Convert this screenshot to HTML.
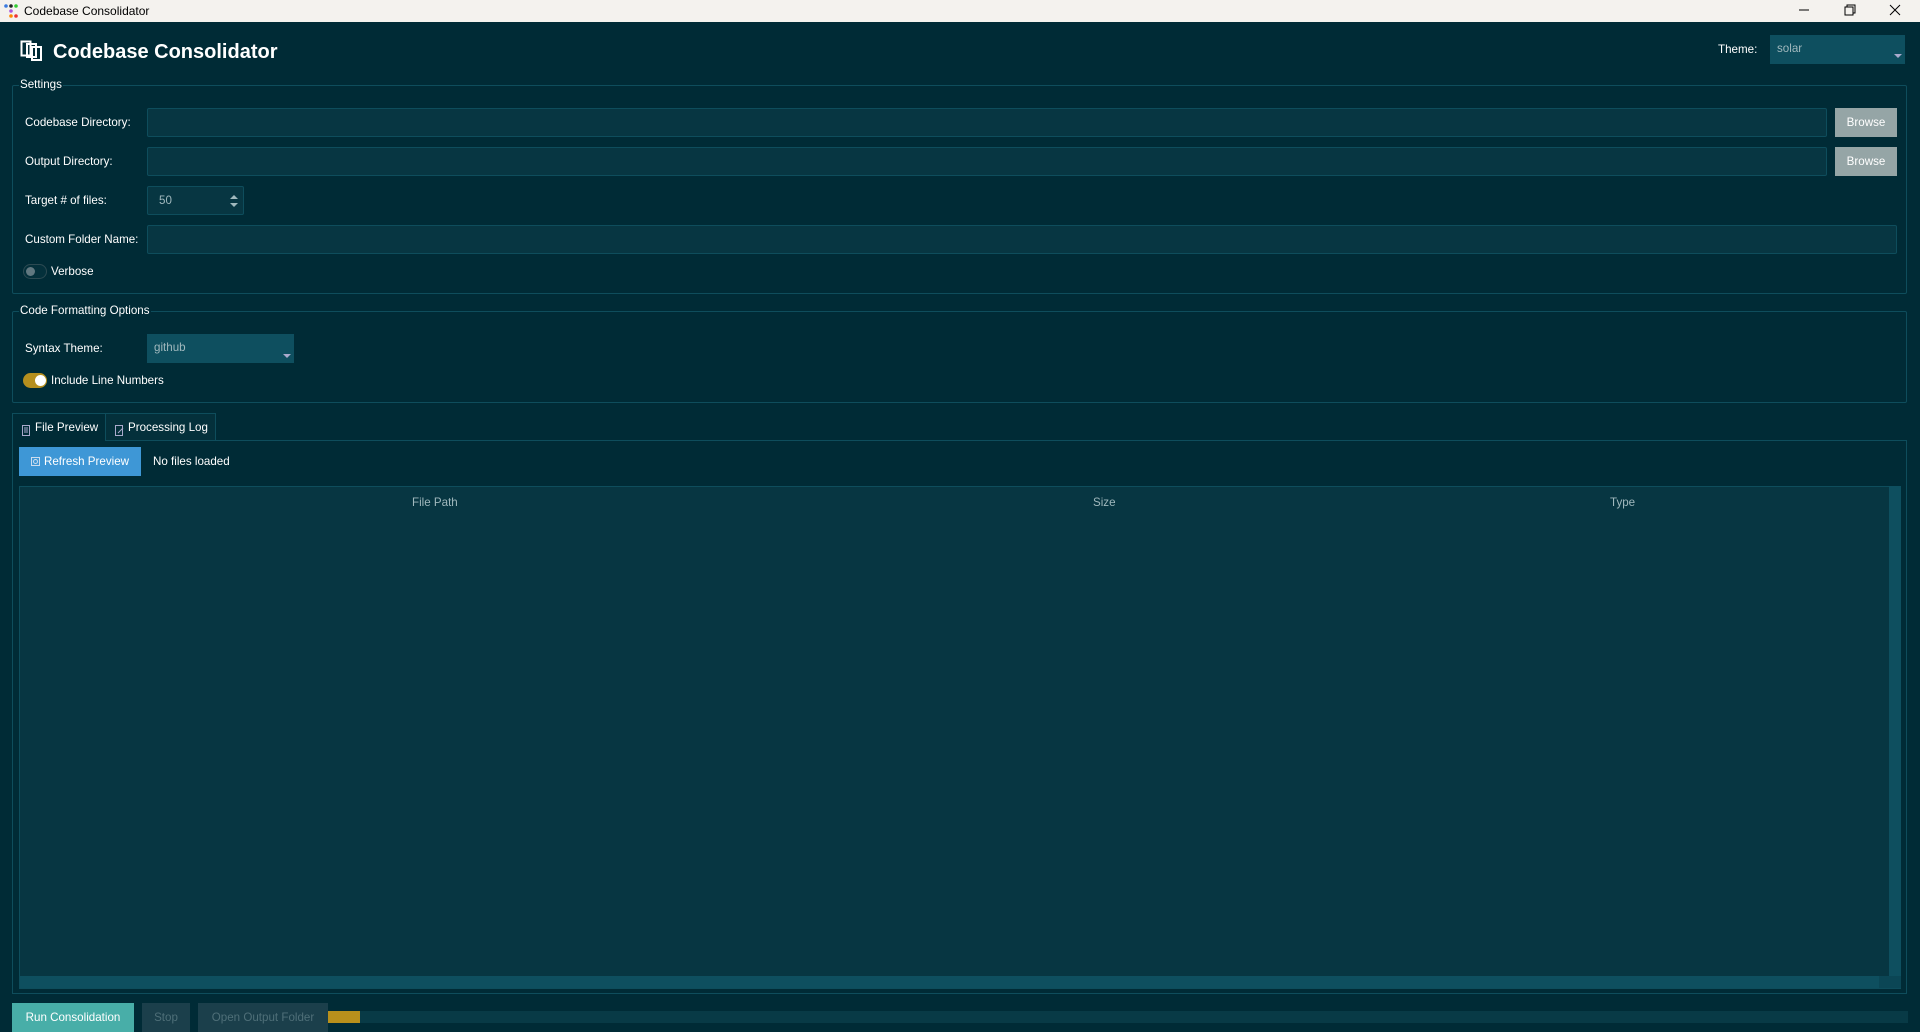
<!DOCTYPE html>
<html><head><meta charset="utf-8"><style>
*{box-sizing:border-box;margin:0;padding:0}
body{width:1920px;height:1032px;background:#002b36;font-family:"Segoe UI","Liberation Sans",sans-serif;font-size:11.6px;color:#fff;position:relative;overflow:hidden}
.a{position:absolute}
.inp{position:absolute;background:#073642;border:1px solid #0e4d5c;border-radius:2px}
.btn{position:absolute;display:flex;align-items:center;justify-content:center}
.grp{position:absolute;border:1px solid #0e4d5c;border-radius:2px}
.leg{position:absolute;background:#002b36;padding:0 1px;line-height:14px}
.lbl{position:absolute;line-height:14px}
</style></head><body>
<div class="a" style="left:0;top:0;width:1920px;height:22px;background:#f4f2ee;color:#000"></div>
<svg class="a" style="left:3px;top:3px" width="16" height="16"><circle cx="3" cy="3" r="1.8" fill="#3a7be0"/><circle cx="8" cy="3" r="1.8" fill="#222"/><circle cx="13" cy="3" r="1.8" fill="#3c3"/><circle cx="8" cy="8" r="1.8" fill="#a5d"/><circle cx="8" cy="13" r="1.8" fill="#f80"/><circle cx="13" cy="13" r="1.8" fill="#e33"/></svg>
<div class="lbl" style="left:24px;top:4px;color:#000;font-size:12px">Codebase Consolidator</div>
<svg class="a" style="left:1794px;top:4px" width="120" height="14"><line x1="5" y1="6" x2="15" y2="6" stroke="#000"/><rect x="51" y="3" width="8" height="8" fill="none" stroke="#000"/><path d="M53 3V1h8v8h-2" fill="none" stroke="#000"/><path d="M96 1l10 10M106 1l-10 10" stroke="#000"/></svg>
<svg class="a" style="left:20px;top:40px" width="24" height="22"><rect x="1.5" y="1.5" width="9" height="14" fill="none" stroke="#fff" stroke-width="2"/><rect x="7" y="4" width="9" height="13" fill="none" stroke="#fff" stroke-width="2"/><rect x="12" y="7" width="9" height="13" fill="none" stroke="#fff" stroke-width="2"/></svg>
<div class="lbl" style="left:53px;top:39px;font-size:20px;font-weight:bold;line-height:26px">Codebase Consolidator</div>
<div class="lbl" style="left:1718px;top:43px">Theme:</div>
<div class="a" style="left:1770px;top:35px;width:135px;height:29px;background:#0e4f5f"><span class="lbl" style="left:7px;top:7px;color:#a0b8bd">solar</span><svg class="a" style="left:124px;top:19px" width="8" height="5"><path d="M0 0h8L4 4z" fill="#aac"/></svg></div>

<div class="grp" style="left:12px;top:85px;width:1895px;height:209px"></div>
<div class="leg" style="left:19px;top:78px">Settings</div>
<div class="lbl" style="left:25px;top:116px">Codebase Directory:</div>
<div class="inp" style="left:147px;top:108px;width:1680px;height:29px"></div>
<div class="btn" style="left:1835px;top:108px;width:62px;height:29px;background:#95a5a6">Browse</div>
<div class="lbl" style="left:25px;top:155px">Output Directory:</div>
<div class="inp" style="left:147px;top:147px;width:1680px;height:29px"></div>
<div class="btn" style="left:1835px;top:147px;width:62px;height:29px;background:#95a5a6">Browse</div>
<div class="lbl" style="left:25px;top:194px">Target # of files:</div>
<div class="inp" style="left:147px;top:186px;width:97px;height:29px"><span class="lbl" style="left:11px;top:7px;color:#a0b8bd">50</span><svg class="a" style="left:82px;top:7px" width="8" height="14"><path d="M0 5L4 1 8 5zM0 9l4 4 4-4z" fill="#a0b8bd"/></svg></div>
<div class="lbl" style="left:25px;top:233px">Custom Folder Name:</div>
<div class="inp" style="left:147px;top:225px;width:1750px;height:29px"></div>
<div class="a" style="left:23px;top:264px;width:24px;height:15px;border-radius:8px;border:1px solid #2c4a52;background:#04303b"><div class="a" style="left:2px;top:2px;width:9px;height:9px;border-radius:50%;background:#617880"></div></div>
<div class="lbl" style="left:51px;top:265px">Verbose</div>

<div class="grp" style="left:12px;top:311px;width:1895px;height:92px"></div>
<div class="leg" style="left:19px;top:304px">Code Formatting Options</div>
<div class="lbl" style="left:25px;top:342px">Syntax Theme:</div>
<div class="a" style="left:147px;top:334px;width:147px;height:29px;background:#0e4f5f"><span class="lbl" style="left:7px;top:7px;color:#a0b8bd">github</span><svg class="a" style="left:136px;top:20px" width="8" height="5"><path d="M0 0h8L4 4z" fill="#aac"/></svg></div>
<div class="a" style="left:23px;top:373px;width:24px;height:15px;border-radius:8px;background:#b58f1e"><div class="a" style="left:12px;top:2px;width:11px;height:11px;border-radius:50%;background:#fff"></div></div>
<div class="lbl" style="left:51px;top:374px">Include Line Numbers</div>

<div class="a" style="left:12px;top:440px;width:1895px;height:554px;border:1px solid #0e4d5c"></div>
<div class="a" style="left:12px;top:413px;width:94px;height:28px;border:1px solid #0e4d5c;border-bottom:none;background:#002b36"></div>
<div class="a" style="left:105px;top:413px;width:111px;height:27px;border:1px solid #0e4d5c;border-bottom:none;background:#04303b"></div>
<svg class="a" style="left:22px;top:425px" width="8" height="11"><rect x="0.5" y="0.5" width="7" height="10" fill="none" stroke="#aac"/><path d="M2 3h4M2 5h4M2 7h4" stroke="#aac"/></svg>
<div class="lbl" style="left:35px;top:421px">File Preview</div>
<svg class="a" style="left:115px;top:425px" width="9" height="11"><rect x="0.5" y="0.5" width="7" height="10" fill="none" stroke="#aac"/><path d="M3 8l5-5" stroke="#aac"/></svg>
<div class="lbl" style="left:128px;top:421px">Processing Log</div>
<div class="btn" style="left:19px;top:447px;width:122px;height:29px;background:#3e97d6"><svg width="9" height="9" style="margin-right:4px"><rect x="0.5" y="0.5" width="8" height="8" fill="none" stroke="#cde"/><circle cx="4.5" cy="4.5" r="2" fill="none" stroke="#cde"/></svg>Refresh Preview</div>
<div class="lbl" style="left:153px;top:455px">No files loaded</div>

<div class="a" style="left:19px;top:486px;width:1882px;height:503px;background:#073642;border:1px solid #0e4d5c"></div>
<div class="lbl" style="left:412px;top:496px;color:#a0b8bd">File Path</div>
<div class="lbl" style="left:1093px;top:496px;color:#a0b8bd">Size</div>
<div class="lbl" style="left:1610px;top:496px;color:#a0b8bd">Type</div>
<div class="a" style="left:1889px;top:486px;width:12px;height:490px;background:#0e4f5f"></div>
<div class="a" style="left:20px;top:976px;width:1869px;height:12px;background:#0e4f5f"></div>
<div class="a" style="left:1879px;top:976px;width:22px;height:12px;background:#0b4655"></div>

<div class="btn" style="left:12px;top:1003px;width:122px;height:29px;background:#48aea8">Run Consolidation</div>
<div class="btn" style="left:142px;top:1003px;width:48px;height:29px;background:#1b3f4b;color:#4f6f78">Stop</div>
<div class="btn" style="left:198px;top:1003px;width:130px;height:29px;background:#1b3f4b;color:#4f6f78">Open Output Folder</div>
<div class="a" style="left:328px;top:1011px;width:1580px;height:12px;background:#083a46"></div>
<div class="a" style="left:328px;top:1011px;width:32px;height:12px;background:#b8901c"></div>
</body></html>
